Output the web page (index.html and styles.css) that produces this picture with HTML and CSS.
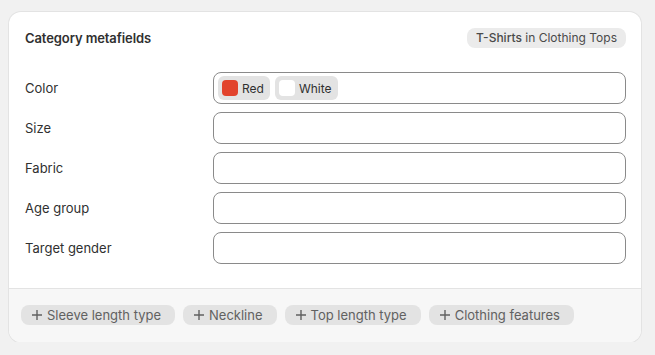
FILE: index.html
```html
<!DOCTYPE html>
<html lang="en">
<head>
    <meta charset="UTF-8">
    <meta name="viewport" content="width=device-width, initial-scale=1.0">
    <link rel="stylesheet" href="styles.css">
    <title>Category metafields</title>
</head>
<body>
    <div class="card">
        <div class="card-body">
            <div class="card-header">
                <h2>Category metafields</h2>
                <span class="badge"><b>T-Shirts</b> in Clothing Tops</span>
            </div>

            <div class="fields">
                <div class="field">
                    <label>Color</label>
                    <div class="input">
                        <span class="chip"><span class="swatch red"></span>Red</span>
                        <span class="chip"><span class="swatch white"></span>White</span>
                    </div>
                </div>
                <div class="field">
                    <label>Size</label>
                    <div class="input"></div>
                </div>
                <div class="field">
                    <label>Fabric</label>
                    <div class="input"></div>
                </div>
                <div class="field">
                    <label>Age group</label>
                    <div class="input"></div>
                </div>
                <div class="field">
                    <label>Target gender</label>
                    <div class="input"></div>
                </div>
            </div>
        </div>

        <div class="card-footer">
            <button class="pill"><svg viewBox="0 0 16 16"><path d="M8 3v10M3 8h10"/></svg>Sleeve length type</button>
            <button class="pill"><svg viewBox="0 0 16 16"><path d="M8 3v10M3 8h10"/></svg>Neckline</button>
            <button class="pill"><svg viewBox="0 0 16 16"><path d="M8 3v10M3 8h10"/></svg>Top length type</button>
            <button class="pill"><svg viewBox="0 0 16 16"><path d="M8 3v10M3 8h10"/></svg>Clothing features</button>
        </div>
    </div>
</body>
</html>
```

FILE: styles.css
```css
body {
    font-family: Inter, "Noto Sans", sans-serif;
    background-color: #f1f1f1;
    color: #303030;
    margin: 0;
    padding: 12px 14px 0 9px;
}

.card {
    background-color: #fff;
    border-radius: 12px;
    box-shadow: 0 0 0 1px #e3e3e3, 0 1px 1px rgba(0, 0, 0, 0.08);
    overflow: hidden;
}

.card-body {
    padding: 16px 15px 24px 16px;
}

.card-header {
    display: flex;
    align-items: center;
    justify-content: space-between;
    height: 20px;
    margin-bottom: 24px;
}

.card-header h2 {
    font-size: 13px;
    font-weight: 600;
    letter-spacing: -0.1px;
    margin: 0;
}

.badge {
    background-color: #ebebeb;
    color: #4a4a4a;
    font-size: 12px;
    line-height: 20px;
    padding: 0 9px;
    border-radius: 8px;
}

.badge b {
    font-weight: 550;
}

.fields {
    display: flex;
    flex-direction: column;
    gap: 8px;
}

.field {
    display: flex;
    align-items: center;
}

.field label {
    width: 188px;
    font-size: 13px;
}

.input {
    flex: 1;
    height: 32px;
    box-sizing: border-box;
    border: 1px solid #8a8a8a;
    border-radius: 8px;
    display: flex;
    align-items: center;
    gap: 5px;
    padding: 0 4px;
}

.chip {
    display: flex;
    align-items: center;
    gap: 4px;
    height: 24px;
    padding: 0 6px 0 4px;
    background-color: #e3e3e3;
    border-radius: 6px;
    font-size: 12px;
    color: #303030;
}

.swatch {
    width: 16px;
    height: 16px;
    border-radius: 4px;
    box-sizing: border-box;
}

.swatch.red {
    background-color: #e2432c;
}

.swatch.white {
    background-color: #fff;
}

.card-footer {
    background-color: #f7f7f7;
    border-top: 1px solid #e3e3e3;
    padding: 16px 12px 17px;
    display: flex;
    gap: 8px;
}

.pill {
    display: flex;
    align-items: center;
    gap: 2px;
    height: 20px;
    padding: 0 14px 0 8px;
    border: none;
    border-radius: 8px;
    background-color: #e3e3e3;
    color: #616161;
    font-family: inherit;
    font-size: 13px;
    cursor: pointer;
}

.pill svg {
    width: 16px;
    height: 16px;
    fill: none;
    stroke: #616161;
    stroke-width: 1.4;
}
```
